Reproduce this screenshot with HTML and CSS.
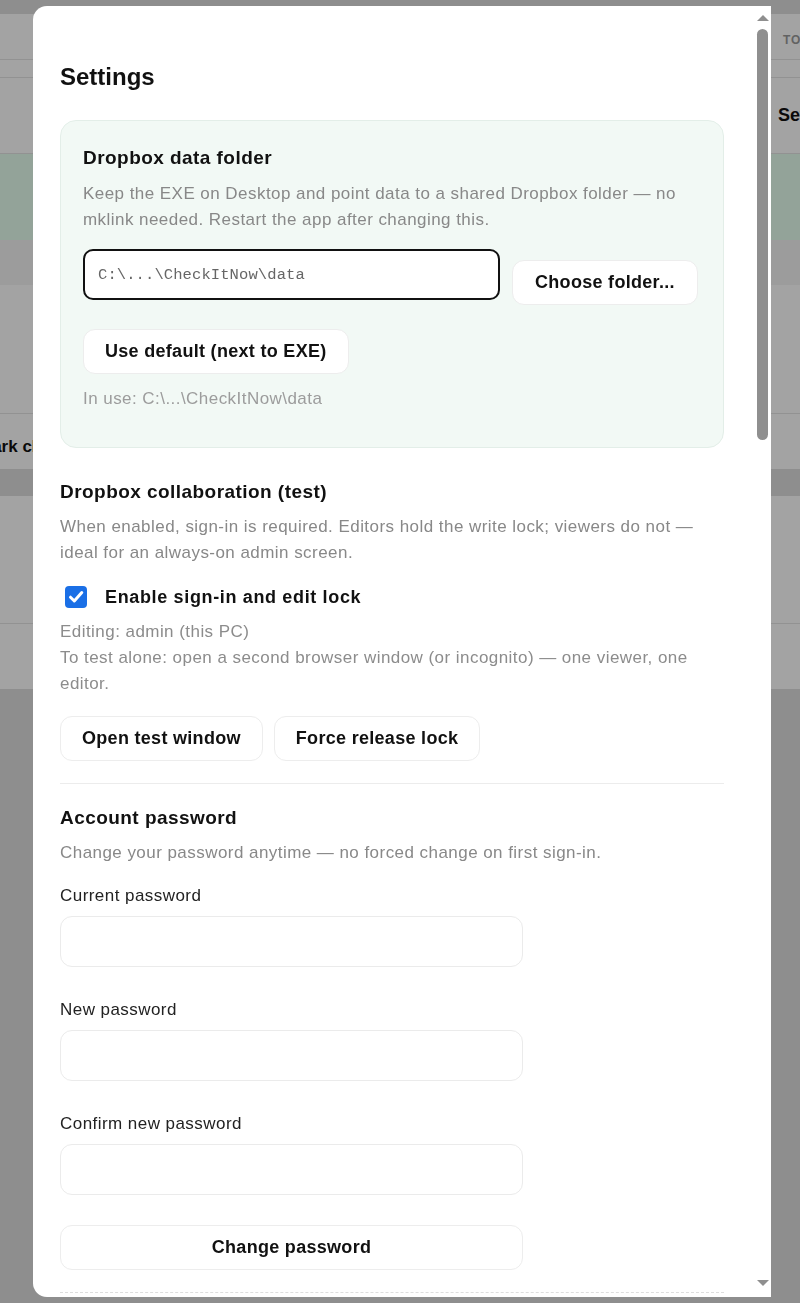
FILE: index.html
```html
<!DOCTYPE html>
<html lang="en">
<head>
<meta charset="utf-8">
<title>Settings</title>
<link rel="stylesheet" href="styles.css">
</head>
<body>
<div class="app">
  <div class="bg-panel bg-top">
    <div class="bg-thead"><span></span><span class="bg-th">TOTAL</span></div>
    <div class="bg-sub"></div>
    <div class="bg-toolbar"><span></span><span class="bg-btn">Settings</span></div>
  </div>
  <div class="bg-banner"></div>
  <div class="bg-strip"></div>
  <div class="bg-panel bg-list">
    <div class="bg-list-body"></div>
    <div class="bg-actions"><span class="bg-action">Mark checked</span></div>
  </div>
  <div class="bg-panel bg-list2">
    <div class="bg-list2-body"></div>
    <div class="bg-list2-foot"></div>
  </div>
</div>

<div class="overlay"></div>

<div class="modal" role="dialog" aria-label="Settings">
  <div class="modal-body">
    <h2 class="title">Settings</h2>

    <section class="card">
      <h3 class="heading">Dropbox data folder</h3>
      <p class="desc">Keep the EXE on Desktop and point data to a shared Dropbox folder — no mklink needed. Restart the app after changing this.</p>
      <div class="path-row">
        <input class="path-input" type="text" value="C:\...\CheckItNow\data">
        <button class="btn btn-offset">Choose folder...</button>
      </div>
      <button class="btn btn-block-gap">Use default (next to EXE)</button>
      <p class="in-use">In use: C:\...\CheckItNow\data</p>
    </section>

    <section class="section">
      <h3 class="heading">Dropbox collaboration (test)</h3>
      <p class="desc">When enabled, sign-in is required. Editors hold the write lock; viewers do not — ideal for an always-on admin screen.</p>
      <label class="check-row">
        <span class="checkbox"><svg viewBox="0 0 22 22" width="22" height="22"><path d="M5.5 11.2 L9.3 15 L16.8 6.6" fill="none" stroke="#fff" stroke-width="3" stroke-linecap="round" stroke-linejoin="round"/></svg></span>
        <span class="check-label">Enable sign-in and edit lock</span>
      </label>
      <p class="note">Editing: admin (this PC)<br>To test alone: open a second browser window (or incognito) — one viewer, one editor.</p>
      <div class="btn-row">
        <button class="btn">Open test window</button>
        <button class="btn">Force release lock</button>
      </div>
    </section>

    <hr class="divider">

    <section class="section">
      <h3 class="heading heading-account">Account password</h3>
      <p class="desc">Change your password anytime — no forced change on first sign-in.</p>
      <div class="field field-first">
        <label class="field-label">Current password</label>
        <input class="field-input" type="password">
      </div>
      <div class="field">
        <label class="field-label">New password</label>
        <input class="field-input" type="password">
      </div>
      <div class="field">
        <label class="field-label">Confirm new password</label>
        <input class="field-input" type="password">
      </div>
      <button class="btn btn-wide">Change password</button>
    </section>

    <div class="next-section"></div>
  </div>
  <div class="scrollbar">
    <svg class="sb-arrow" viewBox="0 0 12 6" width="12" height="6"><path d="M6 0 L12 6 L0 6 Z" fill="#8f8f8f"/></svg>
    <div class="sb-thumb"></div>
    <div class="sb-space"></div>
    <svg class="sb-arrow" viewBox="0 0 12 6" width="12" height="6"><path d="M0 0 L12 0 L6 6 Z" fill="#8f8f8f"/></svg>
  </div>
</div>
</body>
</html>
```

FILE: styles.css
```css
* { box-sizing: border-box; }

html, body {
  margin: 0;
  height: 100%;
}

body {
  background: #dfdfdf;
  font-family: "Liberation Sans", Arial, sans-serif;
  color: #111;
  overflow: hidden;
}

/* ---------- background app (dimmed) ---------- */
.app {
  padding-top: 14px;
}

.bg-panel {
  background: #fff;
}

.bg-thead {
  display: grid;
  grid-template-columns: 771px 1fr;
  height: 46px;
  align-items: center;
  padding-top: 6px;
  border-bottom: 1px solid #e4e4e4;
}

.bg-th {
  padding-left: 12px;
  font-size: 12px;
  font-weight: 700;
  letter-spacing: 1px;
  color: #9a9a9a;
  white-space: nowrap;
}

.bg-sub {
  height: 18px;
  border-bottom: 1px solid #e4e4e4;
}

.bg-toolbar {
  display: grid;
  grid-template-columns: 771px 1fr;
  height: 76px;
  align-items: center;
  border-bottom: 1px solid #e4e4e4;
}

.bg-btn {
  padding-left: 7px;
  font-size: 18px;
  font-weight: 700;
  white-space: nowrap;
}

.bg-banner {
  height: 86px;
  background: #e6fff0;
}

.bg-strip {
  height: 45px;
  background: #f4f4f4;
}

.bg-list-body {
  height: 129px;
  border-bottom: 1px solid #e4e4e4;
}

.bg-actions {
  height: 55px;
  display: flex;
  align-items: center;
  padding-top: 10px;
}

.bg-action {
  margin-left: -22px;
  font-size: 17px;
  font-weight: 700;
  white-space: nowrap;
}

.bg-list2 {
  margin-top: 27px;
}

.bg-list2-body {
  height: 128px;
  border-bottom: 1px solid #e4e4e4;
}

.bg-list2-foot {
  height: 65px;
}

.overlay {
  position: fixed;
  inset: 0;
  background: rgba(0, 0, 0, 0.36);
}

/* ---------- modal ---------- */
.modal {
  position: fixed;
  left: 33px;
  top: 6px;
  width: 738px;
  height: 1291px;
  background: #fff;
  border-radius: 14px 0 0 14px;
  display: flex;
  overflow: hidden;
}

.modal-body {
  flex: 1;
  min-width: 0;
  padding: 56px 30px 0 27px;
  overflow: hidden;
}

.title {
  margin: 0 0 29px;
  font-size: 24px;
  line-height: 29px;
  font-weight: 700;
}

.card {
  background: #f2f9f5;
  border: 1px solid #e3eee8;
  border-radius: 16px;
  padding: 25px 22px 35px;
}

.heading {
  margin: 0;
  font-size: 19px;
  line-height: 24px;
  font-weight: 700;
  letter-spacing: 0.45px;
}

.desc {
  margin: 11px 0 0;
  font-size: 17px;
  line-height: 26px;
  letter-spacing: 0.45px;
  color: #888;
}

.section .desc {
  margin-top: 10px;
}

.path-row {
  display: flex;
  align-items: flex-start;
  gap: 12px;
  margin-top: 16px;
}

.path-input {
  width: 417px;
  height: 51px;
  border: 2px solid #111;
  border-radius: 10px;
  background: #fff;
  padding: 0 13px;
  font-family: "Liberation Mono", "Courier New", monospace;
  font-size: 15.5px;
  letter-spacing: 0.1px;
  color: #666;
  outline: none;
}

.btn {
  height: 45px;
  padding: 0 21px;
  background: #fff;
  border: 1px solid #ededed;
  border-radius: 12px;
  font-family: "Liberation Sans", Arial, sans-serif;
  font-size: 18px;
  font-weight: 700;
  letter-spacing: 0.3px;
  color: #111;
  cursor: pointer;
}

.btn-offset {
  margin-top: 11px;
  padding: 0 22px;
}

.btn-block-gap {
  display: block;
  margin-top: 24px;
}

.in-use {
  margin: 12px 0 0;
  font-size: 17px;
  line-height: 26px;
  letter-spacing: 0.45px;
  color: #9c9c9c;
}

.section {
  margin-top: 32px;
}

.check-row {
  display: flex;
  align-items: center;
  gap: 18px;
  margin-top: 19px;
  padding-left: 5px;
}

.checkbox {
  width: 22px;
  height: 22px;
  border-radius: 4px;
  background: #1a6fe6;
  display: flex;
}

.check-label {
  font-size: 18px;
  line-height: 24px;
  font-weight: 700;
  letter-spacing: 0.65px;
}

.note {
  margin: 10px 0 0;
  font-size: 17px;
  line-height: 26px;
  letter-spacing: 0.45px;
  color: #8c8c8c;
}

.btn-row {
  display: flex;
  gap: 11px;
  margin-top: 19px;
}

.divider {
  margin: 22px 0 0;
  border: 0;
  border-top: 1px solid #ececec;
}

.section + .divider + .section {
  margin-top: 22px;
}

.field {
  margin-top: 30px;
  display: flex;
  flex-direction: column;
}

.field-first {
  margin-top: 17px;
}

.field-label {
  font-size: 17px;
  line-height: 26px;
  letter-spacing: 0.45px;
  color: #222;
}

.field-input {
  margin-top: 7px;
  width: 463px;
  height: 51px;
  border: 1px solid #ebebeb;
  border-radius: 12px;
  background: #fff;
  outline: none;
}

.btn-wide {
  display: block;
  width: 463px;
  margin-top: 30px;
}

.next-section {
  margin-top: 22px;
  border-top: 1px dashed #dedede;
}

/* ---------- scrollbar ---------- */
.scrollbar {
  width: 17px;
  flex: none;
  display: flex;
  flex-direction: column;
  align-items: center;
  padding: 9px 0 11px;
  background: #fff;
}

.sb-arrow {
  display: block;
  flex: none;
}

.sb-thumb {
  margin-top: 8px;
  width: 11px;
  height: 411px;
  border-radius: 6px;
  background: #8f8f8f;
  flex: none;
}

.sb-space {
  flex: 1;
}
```
